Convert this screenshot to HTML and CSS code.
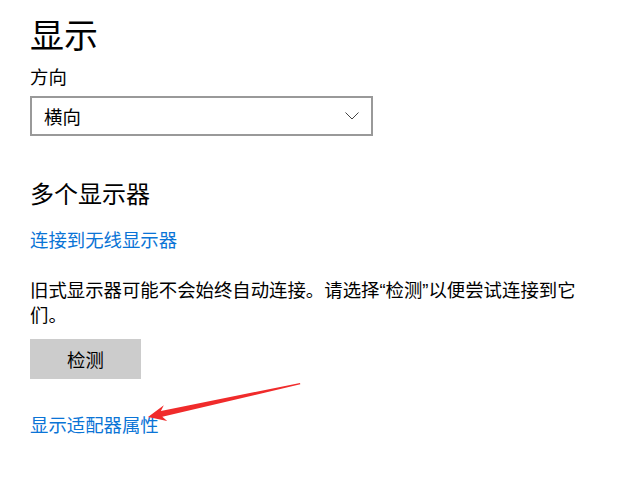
FILE: index.html
```html
<!DOCTYPE html>
<html lang="zh-CN">
<head>
<meta charset="utf-8">
<link rel="stylesheet" href="styles.css">
</head>
<body>
<main class="page">
  <h1 class="title">显示</h1>
  <div class="label">方向</div>
  <div class="select">
    <span class="select-text">横向</span>
    <svg class="chevron" width="14" height="8" viewBox="0 0 14 8"><path d="M0.5 0.5 L7 7 L13.5 0.5" fill="none" stroke="#444" stroke-width="1"/></svg>
  </div>
  <h2 class="subtitle">多个显示器</h2>
  <a class="link link-wireless" href="#">连接到无线显示器</a>
  <p class="para">旧式显示器可能不会始终自动连接。请选择“检测”以便尝试连接到它们。</p>
  <button class="btn">检测</button>
  <a class="link link-adapter" href="#">显示适配器属性</a>
</main>
<svg class="arrow" width="620" height="478" viewBox="0 0 620 478">
  <polygon points="300,383 300.3,384.2 162.3,416.8 167.2,420.9 148,417 163.8,405.3 160.9,411" fill="#f02b2b"/>
</svg>
</body>
</html>
```
FILE: styles.css
```css
html, body {
  margin: 0;
  padding: 0;
  background: #fff;
}
body {
  font-family: "Microsoft YaHei", "Noto Sans CJK SC", sans-serif;
  color: #000;
  width: 620px;
  height: 478px;
  overflow: hidden;
  position: relative;
}
.page {
  padding: 0 0 0 30px;
  display: flex;
  flex-direction: column;
  align-items: flex-start;
}
.title {
  font-size: 34px;
  font-weight: normal;
  line-height: 44px;
  margin: 12px 0 0 0;
}
.label {
  font-size: 18.4px;
  line-height: 25px;
  margin-top: 8px;
}
.select {
  box-sizing: border-box;
  width: 343px;
  height: 40px;
  border: 2px solid #999;
  margin-top: 7px;
  display: flex;
  align-items: center;
  justify-content: space-between;
  padding: 0 12px 0 12px;
}
.select-text {
  font-size: 18.4px;
  line-height: 25px;
}
.chevron {
  display: block;
}
.subtitle {
  font-size: 24px;
  font-weight: normal;
  line-height: 32px;
  margin: 41px 0 0 0;
}
.link {
  color: #0a74d6;
  text-decoration: none;
  font-size: 18.4px;
  line-height: 25px;
}
.link-wireless {
  margin-top: 18px;
}
.para {
  font-family: "Liberation Sans", "Noto Sans CJK SC", sans-serif;
  font-size: 18.4px;
  line-height: 25px;
  width: 560px;
  margin: 26px 0 0 0;
}
.btn {
  margin-top: 11px;
  width: 111px;
  height: 40px;
  background: #cccccc;
  border: none;
  font-family: inherit;
  font-size: 18.4px;
  color: #000;
  padding: 0;
}
.link-adapter {
  margin-top: 33px;
}
.arrow {
  position: absolute;
  left: 0;
  top: 0;
  pointer-events: none;
}
```
